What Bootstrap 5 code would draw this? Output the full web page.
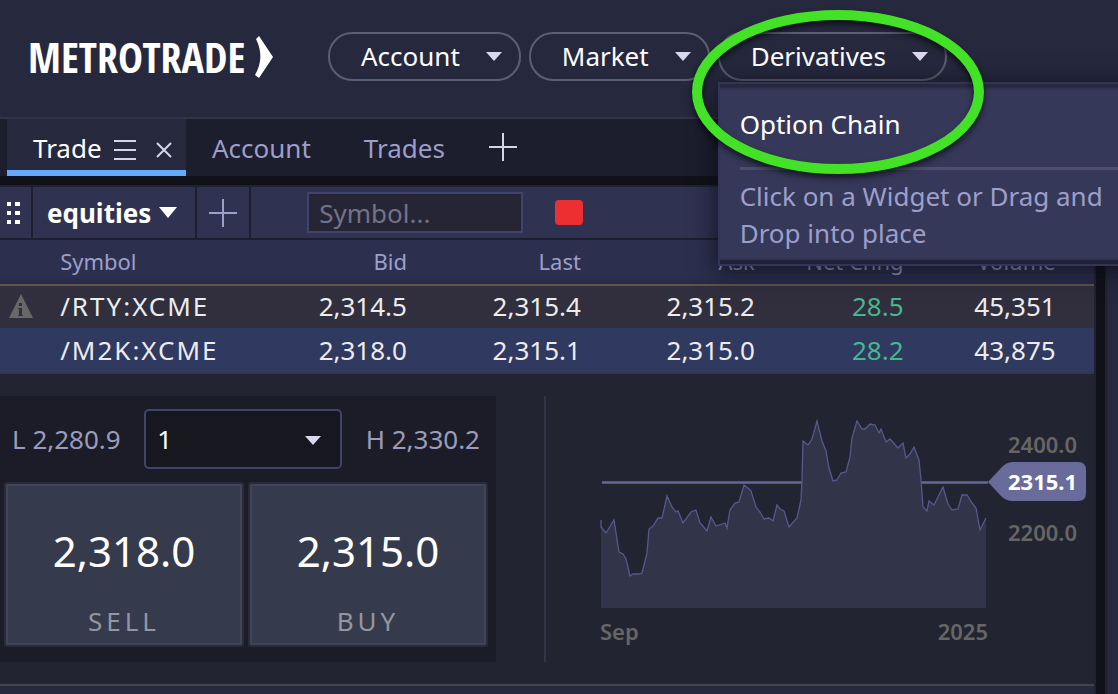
<!DOCTYPE html>
<html lang="en">
<head>
<meta charset="utf-8">
<meta name="viewport" content="width=device-width, initial-scale=1">
<title>MetroTrade</title>
<link rel="stylesheet" href="https://cdn.jsdelivr.net/npm/bootstrap@5.3.0/dist/css/bootstrap.min.css">
<style>
body{background:#111219;color:#fff;font-family:"Noto Sans","Open Sans",sans-serif;font-size:26px;line-height:36px;overflow-x:hidden}
button,input,select{font-family:inherit}
.topbar{background:#26283e;height:119px;border-bottom:2px solid #323347;padding:0 28px 4px}
.logo{color:#fff;font-family:"Open Sans Condensed","Liberation Sans Narrow",sans-serif;font-weight:700;font-size:42px;line-height:48px;width:300px;gap:10px}
.pill{border:2px solid #5d5e70;border-radius:24px;height:49px;padding:0 17px 0 31px;font-size:26px;line-height:45px;gap:26px;color:#fff;background:none}
.tri{width:0;height:0;border:8px solid transparent;border-top:9px solid #d9d8ee;border-bottom:0}
.widget-menu{background:#363859;border:2px solid #32345a;border-radius:0;color:#fff;width:424px;height:184px;padding:22px 20px 0;font-size:26px;top:50px;left:0;line-height:37px;box-shadow:0 4px 22px 2px rgba(8,8,18,.7),inset 0 6px 3px -2px #26283e,inset 0 -6px 2px -2px #1e2033}
.widget-menu a{color:#fff;padding:0;border-bottom:3px solid #4d4e70;background:none!important;line-height:37px;height:64px}
.hint{color:#9d9fca;margin:8px 0 0}
.ring{left:-34px;top:-30px;width:308px;height:184px;z-index:1100;pointer-events:none;filter:drop-shadow(0 4px 3px #0009)}
.tabs-strip{background:#1c1d2d;height:57px;padding-left:7px}
.tab-on{background:#26283e;border-bottom:6px solid #65a8ff;width:179px;padding:6px 0 0 26px;gap:12px;height:57px}
.tab-on svg{position:relative;top:2px}
.tab-off{color:#9d9fca;height:57px;line-height:58px;text-decoration:none;margin-left:26px}
.tab-off + .tab-off{margin-left:53px}
.add-tab{margin-left:44px}
.icon-btn{border:0;background:none;padding:0;display:flex}
.workspace{gap:9px;padding-top:9px}
.main-pane{background:#222432;border-top:2px solid #202232;border-right:2px solid #202232;min-width:0}
.side-pane{background:#26283e;width:13px;border:2px solid #202232;border-width:2px 0 0 2px}
.toolbar{background:#2f3250;height:53px;border-bottom:2px solid #1d1f30}
.cell{border-right:2px solid #1d1f30}
.grip{padding:0 10px 0 7px}
.list-name{padding:0 14px}
.find{background:#252535;border:2px solid #40436c;color:#fff;width:216px;height:41px;font-size:26px;line-height:36px;padding:0 10px;outline:0}
.find::placeholder{color:#727289}
.stopper{width:28px;height:25px;border-radius:4px;background:#ed2f31;border:0;padding:0;margin-left:32px}
.quotes{table-layout:fixed;width:100%;font-size:26px;border-collapse:separate;border-spacing:0}
.quotes th{background:linear-gradient(#2c304e 80%,#28294a);color:#9d9fca;font-weight:400;font-size:22px;height:46px;line-height:40px;border-bottom:2px solid #5a574d;padding:0 0 2px}
.quotes td{height:42px;line-height:40px;padding:0;color:#ececee}
.quotes .r1 td{background:#312f3d;padding-bottom:2px}
.quotes .r2 td{background:#30395f;height:46px;border-bottom:2px solid #343650}
.quotes .r1 .up,.quotes .r2 .up{color:#45b890}
.sym{letter-spacing:2px}
.detail{padding:22px 0;border-bottom:2px solid #44454e}
.ticket{background:#1c1c28;width:496px;padding:13px 8px 15px 4px}
.lohi{color:#9a9cba}
.qty{background:#171720;border:2px solid #40436c;border-radius:5px;width:198px;height:60px;color:#fff;font-size:26px;padding:0 11px;appearance:none}
.qty-arrow{right:21px;top:27px}
.side-pair{padding-top:13px}
.side-btn{background:#363a4d;border:2px solid #292b3a;border-radius:3px;box-shadow:inset 0 0 0 2px #404456;color:#fff;height:165px;padding:20px 0 0}
.px{font-size:42px;line-height:92px}
.act{color:#94969f;font-size:26px;letter-spacing:4px;line-height:48px}
.divide{width:2px;background:#333448;margin-left:48px}
.chart{padding:4px 0 0 54px;color:#666665;font-size:22px;font-weight:600;line-height:30px}
.axis{width:106px;padding:29px 0 0 20px}
.tag{height:39px;line-height:39px;margin:3px 0 16px;color:#fff;font-weight:700}
.tag svg{position:absolute;left:-21px;top:0;z-index:-1}
.plot{margin-bottom:7px;height:209px;width:100%}
.lower{background:#26283e}
</style>
</head>
<body class="min-vh-100 d-flex flex-column">
<header class="topbar d-flex align-items-center">
  <div class="logo d-flex align-items-center">METROTRADE
    <svg width="18" height="42" viewBox="0 0 18 42" fill="#fff" aria-hidden="true"><path d="M1 3 4 0 18 21 4 42 0 39C7 27 7 15 1 3Z"/></svg>
  </div>
  <nav class="d-flex gap-2">
    <button class="pill d-flex align-items-center" type="button">Account <span class="tri"></span></button>
    <button class="pill d-flex align-items-center" type="button">Market <span class="tri"></span></button>
    <div class="dropdown position-relative">
      <button class="pill d-flex align-items-center" type="button" aria-expanded="true">Derivatives <span class="tri"></span></button>
      <div class="dropdown-menu widget-menu show">
        <a class="dropdown-item" href="#">Option Chain</a>
        <p class="hint">Click on a Widget or Drag and Drop into place</p>
      </div>
      <svg class="ring position-absolute" viewBox="0 0 308 184" fill="none" aria-hidden="true"><ellipse cx="154" cy="90" rx="141" ry="77" stroke="#43e227" stroke-width="10"/></svg>
    </div>
  </nav>
</header>
<nav class="tabs-strip d-flex">
  <div class="tab-on d-flex align-items-center">
    <a class="text-white text-decoration-none" href="#">Trade</a>
    <button class="icon-btn" type="button" aria-label="Menu"><svg width="22" height="20" viewBox="0 0 22 20" stroke="#d5d5e6" stroke-width="2"><path d="M0 1H22M0 10H22M0 19H22"/></svg></button>
    <button class="icon-btn ms-2" type="button" aria-label="Close"><svg width="16" height="16" viewBox="0 0 16 16" stroke="#d5d5e6" stroke-width="2"><path d="M1 1 15 15M15 1 1 15"/></svg></button>
  </div>
  <a class="tab-off" href="#">Account</a>
  <a class="tab-off" href="#">Trades</a>
  <button class="icon-btn add-tab align-items-center" type="button" aria-label="Add tab"><svg width="28" height="30" viewBox="0 0 28 30" stroke="#d5d5e6" stroke-width="2"><path d="M0 14H28M14 0V28"/></svg></button>
</nav>
<main class="workspace d-flex flex-grow-1">
  <section class="main-pane flex-grow-1 d-flex flex-column">
    <div class="toolbar d-flex">
      <div class="cell grip d-flex align-items-center"><svg width="14" height="22" fill="#fff" aria-hidden="true"><path d="M0 0h4v4H0zM8 0h5v4H8zM0 9h4v4H0zM8 9h5v4H8zM0 18h4v4H0zM8 18h5v4H8z"/></svg></div>
      <button class="icon-btn cell list-name align-items-center text-white fw-bold" type="button">equities <svg class="ms-2 me-1" width="18" height="11" fill="#fff"><path d="M0 0H18L9 11Z"/></svg></button>
      <button class="icon-btn cell align-items-center px-2" type="button" aria-label="Add list"><svg class="mx-1" width="28" height="28" stroke="#9d9fca" stroke-width="2"><path d="M0 14H28M14 0V28"/></svg></button>
      <div class="d-flex align-items-center ms-5 ps-2"><input class="find" type="text" placeholder="Symbol..." aria-label="Symbol"><button class="stopper" type="button" aria-label="Color"></button></div>
    </div>
    <table class="quotes text-end">
      <colgroup><col style="width:5.5%"><col style="width:15.8%"><col style="width:15.9%"><col style="width:15.9%"><col style="width:15.9%"><col style="width:13.6%"><col style="width:13.9%"><col></colgroup>
      <thead><tr><th></th><th class="text-start">Symbol</th><th>Bid</th><th>Last</th><th>Ask</th><th>Net Chng</th><th>Volume</th><th></th></tr></thead>
      <tbody>
        <tr class="r1"><td class="text-start"><svg class="ms-2 d-block" width="26" height="26" viewBox="0 0 26 26"><path d="M13 1 25 25H1Z" fill="#686868"/><path d="M11 10h3v3h-3zM10 15h4v7h1v1h-5v-1h1v-6h-1z" fill="#312f3d"/></svg></td><td class="text-start sym">/RTY:XCME</td><td>2,314.5</td><td>2,315.4</td><td>2,315.2</td><td class="up">28.5</td><td>45,351</td><td></td></tr>
        <tr class="r2"><td></td><td class="text-start sym">/M2K:XCME</td><td>2,318.0</td><td>2,315.1</td><td>2,315.0</td><td class="up">28.2</td><td>43,875</td><td></td></tr>
      </tbody>
    </table>
    <div class="detail d-flex">
      <div class="ticket flex-shrink-0">
        <div class="lohi d-flex justify-content-between align-items-center ps-2">
          <span>L 2,280.9</span>
          <div class="position-relative"><select class="qty d-block" aria-label="Quantity"><option>1</option></select><span class="tri qty-arrow position-absolute"></span></div>
          <span class="pe-2">H 2,330.2</span>
        </div>
        <div class="d-flex side-pair">
          <button class="side-btn flex-fill me-1 w-50" type="button"><span class="px d-block">2,318.0</span><span class="act d-block">SELL</span></button>
          <button class="side-btn flex-fill w-50" type="button"><span class="px d-block">2,315.0</span><span class="act d-block">BUY</span></button>
        </div>
      </div>
      <div class="divide"></div>
      <div class="chart d-flex flex-grow-1">
        <div class="flex-grow-1">
          <svg class="plot d-block" viewBox="0 0 388 209" preserveAspectRatio="none" aria-label="Price chart">
            <path d="M2 82.500H388" stroke="#666896" stroke-width="2.500"/>
            <path d="M1 208V120L1 127 6 133 14 120 19 152 23 154 26 159 30 176 33 174 39 174 42 173 47 153 49 129 53 126 58 118 62 118 67 96 72 107 76 112 78 111 83 123 91 112 96 110 100 123 102 125 107 131 111 117 116 126 125 123 127 128 130 110 135 103 139 102 144 85 148 88 151 91 156 107 160 112 164 119 169 118 173 121 177 105 180 109 184 111 189 127 197 118 201 100 202 80 203 41 208 45 212 39 217 21 222 41 226 51 229 68 233 81 237 80 241 73 246 72 250 57 252 38 257 21 262 29 265 29 270 24 275 25 279 33 281 29 286 42 290 39 298 48 303 43 306 58 310 54 314 47 319 60 321 80 323 107 327 111 329 101 334 105 343 87 348 104 352 110 358 109 362 95 367 95 372 103 376 108 380 130 386 118V208Z" fill="#32344a"/>
            <path d="M1 120V127L6 133 14 120 19 152 23 154 26 159 30 176 33 174 39 174 42 173 47 153 49 129 53 126 58 118 62 118 67 96 72 107 76 112 78 111 83 123 91 112 96 110 100 123 102 125 107 131 111 117 116 126 125 123 127 128 130 110 135 103 139 102 144 85 148 88 151 91 156 107 160 112 164 119 169 118 173 121 177 105 180 109 184 111 189 127 197 118 201 100 202 80 203 41 208 45 212 39 217 21 222 41 226 51 229 68 233 81 237 80 241 73 246 72 250 57 252 38 257 21 262 29 265 29 270 24 275 25 279 33 281 29 286 42 290 39 298 48 303 43 306 58 310 54 314 47 319 60 321 80 323 107 327 111 329 101 334 105 343 87 348 104 352 110 358 109 362 95 367 95 372 103 376 108 380 130 386 118" fill="none" stroke="#56598a" stroke-width="1.300"/>
          </svg>
          <div class="d-flex justify-content-between"><span>Sep</span><span>2025</span></div>
        </div>
        <div class="axis">
          <div>2400.0</div>
          <div class="tag position-relative z-1">2315.1<svg width="99" height="39" viewBox="0 0 99 39" fill="#696c9b"><path d="M1 20 14 6Q19 0 26 0H91Q99 0 99 8V31Q99 39 91 39H26Q19 39 14 34Z"/></svg></div>
          <div>2200.0</div>
        </div>
      </div>
    </div>
    <div class="lower flex-grow-1"></div>
  </section>
  <aside class="side-pane flex-shrink-0"></aside>
</main>
<script src="https://cdn.jsdelivr.net/npm/bootstrap@5.3.0/dist/js/bootstrap.bundle.min.js"></script>
</body>
</html>
